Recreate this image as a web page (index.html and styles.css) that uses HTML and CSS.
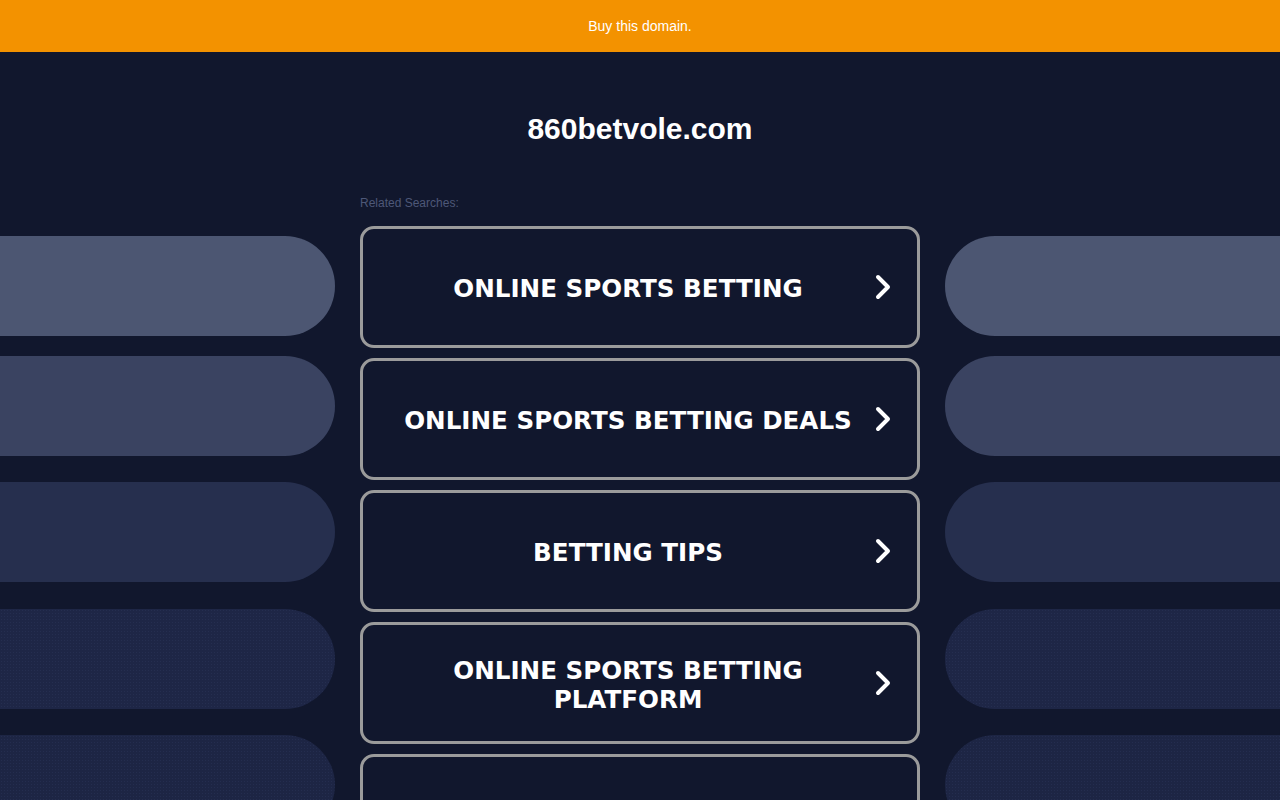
FILE: index.html
```html
<!DOCTYPE html>
<html lang="en">
<head>
<meta charset="utf-8">
<title>860betvole.com</title>
<link rel="stylesheet" href="styles.css">
</head>
<body>
<div class="topbar">Buy this domain.</div>
<h1 class="domain">860betvole.com</h1>
<div class="row">
  <div class="side side-left">
    <div class="pill p1"></div>
    <div class="pill p2"></div>
    <div class="pill p3"></div>
    <div class="pill p4"></div>
    <div class="pill p5"></div>
  </div>
  <div class="center">
    <div class="related">Related Searches:</div>
    <div class="links">
      <a class="link" href="#"><span class="label">ONLINE SPORTS BETTING</span><svg class="chev" viewBox="0 0 16 26" width="16" height="26"><polyline points="3,3 13,13 3,23"/></svg></a>
      <a class="link" href="#"><span class="label">ONLINE SPORTS BETTING DEALS</span><svg class="chev" viewBox="0 0 16 26" width="16" height="26"><polyline points="3,3 13,13 3,23"/></svg></a>
      <a class="link" href="#"><span class="label">BETTING TIPS</span><svg class="chev" viewBox="0 0 16 26" width="16" height="26"><polyline points="3,3 13,13 3,23"/></svg></a>
      <a class="link" href="#"><span class="label">ONLINE SPORTS BETTING PLATFORM</span><svg class="chev" viewBox="0 0 16 26" width="16" height="26"><polyline points="3,3 13,13 3,23"/></svg></a>
      <a class="link" href="#"><span class="label">SPORTS BETTING SITES</span><svg class="chev" viewBox="0 0 16 26" width="16" height="26"><polyline points="3,3 13,13 3,23"/></svg></a>
    </div>
  </div>
  <div class="side side-right">
    <div class="pill p1"></div>
    <div class="pill p2"></div>
    <div class="pill p3"></div>
    <div class="pill p4"></div>
    <div class="pill p5"></div>
  </div>
</div>
</body>
</html>
```
FILE: styles.css
```css
html, body {
  margin: 0;
  padding: 0;
}
body {
  background: #11172d;
  font-family: "Liberation Sans", Arial, sans-serif;
  color: #fff;
  height: 800px;
  overflow: hidden;
}
.topbar {
  height: 52px;
  background: #f39200;
  color: #fff;
  font-size: 14px;
  display: flex;
  align-items: center;
  justify-content: center;
}
.domain {
  margin: 0;
  padding-top: 59px;
  font-size: 30px;
  line-height: 36px;
  font-weight: bold;
  text-align: center;
}
.row {
  margin-top: 49px;
  display: flex;
  gap: 25px;
}
.side {
  width: 335px;
  flex: none;
  padding-top: 40px;
  display: flex;
  flex-direction: column;
}
.center {
  width: 560px;
  flex: none;
}
.pill {
  height: 100px;
  flex: none;
}
.side-left .pill { border-radius: 0 50px 50px 0; }
.side-right .pill { border-radius: 50px 0 0 50px; }
.p1 { background: #4c5672; }
.p2 { background: #3a4361; margin-top: 20px; }
.p3 { background: #262f4e; margin-top: 26px; }
.p4 {
  background-color: #1e2646;
  background-image: radial-gradient(circle, rgba(70, 85, 130, 0.18) 0.6px, transparent 0.9px);
  background-size: 3px 3px;
  margin-top: 27px;
}
.p5 {
  background-color: #1d2544;
  background-image: radial-gradient(circle, rgba(70, 85, 130, 0.18) 0.6px, transparent 0.9px);
  background-size: 3px 3px;
  margin-top: 26px;
}
.related {
  font-size: 12px;
  line-height: 14px;
  color: #4e5878;
  margin-bottom: 16px;
}
.links {
  display: flex;
  flex-direction: column;
  gap: 10px;
}
.link {
  box-sizing: border-box;
  height: 122px;
  border: 3px solid #9b9b9b;
  border-radius: 14px;
  display: flex;
  align-items: center;
  padding: 0 26px 0 30px;
  text-decoration: none;
  color: #fff;
}
.label {
  flex: 1;
  text-align: center;
  font-family: "DejaVu Sans", Verdana, sans-serif;
  font-weight: bold;
  font-size: 24.6px;
  line-height: 29px;
  padding-top: 3px;
  margin-right: 12px;
}
.chev {
  flex: none;
  fill: none;
  stroke: #fff;
  stroke-width: 4;
  stroke-linecap: round;
  stroke-linejoin: round;
}
```
